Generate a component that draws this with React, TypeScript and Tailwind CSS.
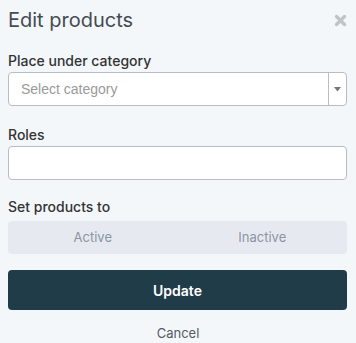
import React, { useState } from "react";

const font = { fontFamily: "Inter, 'Noto Sans', sans-serif" };

export default function App() {
  const [status, setStatus] = useState<"active" | "inactive" | null>(null);
  const [roles, setRoles] = useState("");

  return (
    <div
      className="h-[343px] w-[356px] bg-[#f4f7fa] px-2 text-[#333]"
      style={font}
    >
      <div className="flex h-[44px] items-start justify-between pt-[6px]">
        <h1 className="text-[20px] font-normal leading-[28px] text-[#464b53]">
          Edit products
        </h1>
        <button className="mr-[1px] mt-[8px] text-[#c0c3c7]">
          <svg width="13" height="13" viewBox="0 0 13 13">
            <path
              d="M2.5 2.5 L10.5 10.5 M10.5 2.5 L2.5 10.5"
              stroke="currentColor"
              strokeWidth="3.4"
              strokeLinecap="round"
            />
          </svg>
        </button>
      </div>

      <label className="mt-[7px] block text-[14px] font-medium leading-[20px] text-[#333]">
        Place under category
      </label>
      <div className="mt-[1px] flex h-[34px] w-[339px] items-stretch rounded-[4px] border border-[#b9bdc7] bg-white">
        <div
          className="flex flex-1 items-center pl-3 text-[14px] text-[#9a9a9a]"
          style={{ fontFamily: "'Liberation Sans', Arial, sans-serif" }}
        >
          Select category
        </div>
        <div className="flex w-[18px] items-center justify-center border-l border-[#b9bdc7]">
          <svg width="7" height="5" viewBox="0 0 7 5">
            <path d="M0 0 H7 L3.5 4.5 Z" fill="#777" />
          </svg>
        </div>
      </div>

      <label className="mt-[19px] block text-[14px] font-medium leading-[20px] text-[#333]">
        Roles
      </label>
      <input
        value={roles}
        onChange={(e) => setRoles(e.target.value)}
        className="mt-[1px] h-[34px] w-[339px] rounded-[4px] border border-[#b9bdc7] bg-white px-3 text-[14px] outline-none"
      />

      <label className="mt-[17px] block text-[14px] font-medium leading-[20px] text-[#333]">
        Set products to
      </label>
      <div className="mt-[4px] flex h-[33px] w-[339px] rounded-[4px] bg-[#e6eaf0] text-[13px] text-[#8b95a1]">
        <button
          onClick={() => setStatus("active")}
          className={
            status === "active"
              ? "flex-1 rounded-[4px] bg-white"
              : "flex-1 rounded-[4px]"
          }
        >
          Active
        </button>
        <button
          onClick={() => setStatus("inactive")}
          className={
            status === "inactive"
              ? "flex-1 rounded-[4px] bg-white"
              : "flex-1 rounded-[4px]"
          }
        >
          Inactive
        </button>
      </div>

      <button className="mt-[16px] h-[40px] w-[339px] rounded-[4px] bg-[#1f3c48] text-[14px] font-semibold text-white">
        Update
      </button>
      <div className="mt-[13px] text-center text-[13px] leading-[20px] text-[#555b63]">
        Cancel
      </div>
    </div>
  );
}
